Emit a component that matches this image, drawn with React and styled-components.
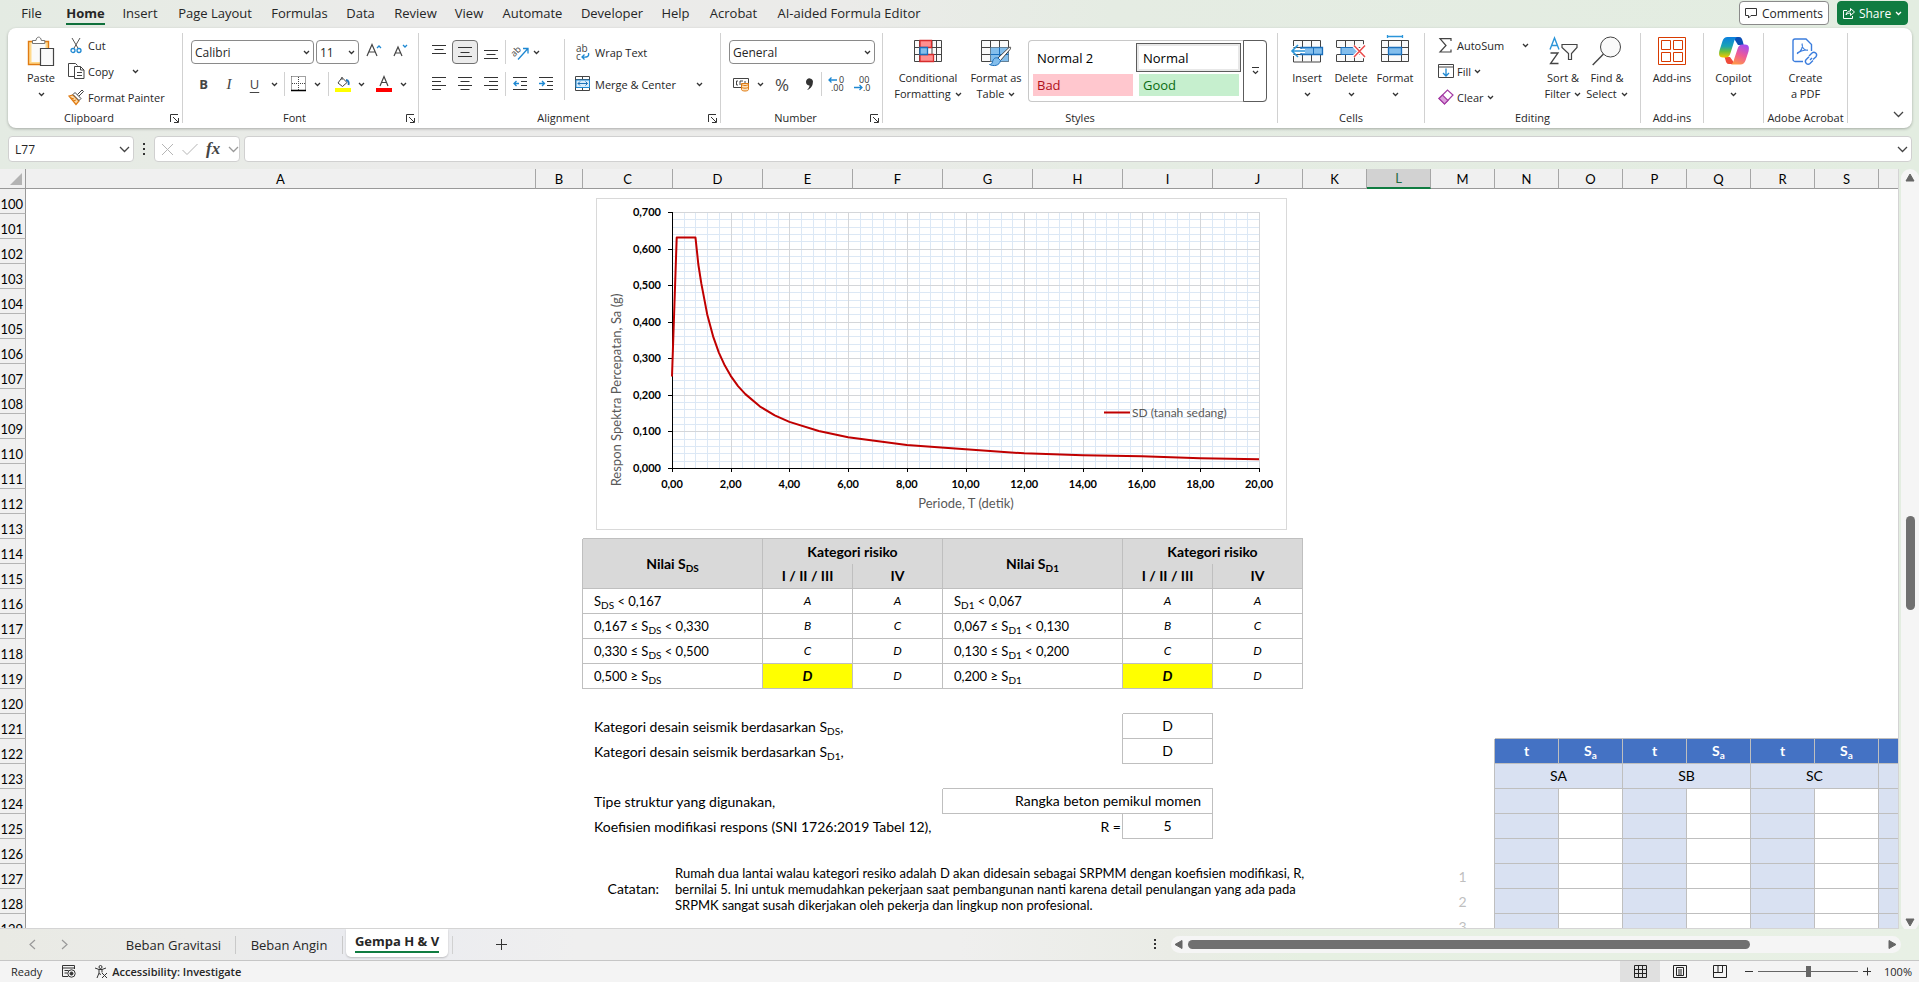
import React, { useState } from 'react'
import styled, { createGlobalStyle, css } from 'styled-components'

const UI = `'Open Sans', 'Noto Sans', sans-serif`
const SHEET = `Lato, 'Open Sans', sans-serif`

const GlobalStyle = createGlobalStyle`
  * {
    box-sizing: border-box;
  }
  body {
    margin: 0;
    overflow: hidden;
    font-family: ${UI};
    color: #262626;
  }
  button, input, select {
    font: inherit;
    color: inherit;
    margin: 0;
    padding: 0;
    border: none;
    background: none;
    outline: none;
  }
  svg {
    display: block;
    flex: none;
    overflow: visible;
  }
`

const Window = styled.div`
  height: 100vh;
  display: flex;
  flex-direction: column;
  background: linear-gradient(90deg, #e4ebe3 0%, #e7ebe5 8%, #ebebea 20%, #ebebe9 44%, #e5ece3 58%, #e3ede1 100%);
`

/* ---------- menu ---------- */

const MenuBar = styled.nav`
  height: 28px;
  flex: none;
  display: flex;
  align-items: flex-start;
  padding: 1px 11px 0 11px;
`

const MenuTab = styled.button`
  height: 24px;
  width: ${p => p.$w}px;
  display: flex;
  justify-content: center;
  font-size: 13px;
  line-height: 24px;
  white-space: nowrap;
`

const MenuText = styled.span`
  height: 24px;
  font-weight: ${p => (p.$active ? 700 : 400)};
  border-bottom: 2px solid ${p => (p.$active ? '#0f703b' : 'transparent')};
`

const MenuSpace = styled.div`
  flex: 1;
`

const CommentsButton = styled.button`
  height: 24px;
  width: 90px;
  display: flex;
  align-items: center;
  justify-content: center;
  gap: 5px;
  font-size: 12px;
  border: 1px solid #8a8a8a;
  border-radius: 4px;
  background: #fff;
`

const ShareButton = styled(CommentsButton)`
  width: 71px;
  margin: 0 0 0 8px;
  gap: 4px;
  color: #fff;
  background: #107c41;
  border-color: #107c41;
`

/* ---------- ribbon ---------- */

const Ribbon = styled.section`
  height: 100px;
  flex: none;
  display: flex;
  margin: 0 7px 0 8px;
  padding: 5px 0;
  background: #fff;
  border-radius: 8px;
  box-shadow: 0 1px 3px rgba(0, 0, 0, 0.28);
  font-size: 11px;
`

const GroupBox = styled.div`
  width: ${p => p.$w}px;
  height: 90px;
  flex: none;
  display: flex;
  flex-direction: column;
  border-right: 1px solid #d1d1d1;
`

const GroupBody = styled.div`
  flex: 1;
  min-height: 0;
  display: flex;
  padding: 0 ${p => p.$pad || 0}px;
  justify-content: ${p => (p.$center ? 'center' : 'flex-start')};
`

const GroupFooter = styled.div`
  height: 12px;
  flex: none;
  display: flex;
  line-height: 14px;
`

const GroupName = styled.div`
  flex: 1;
  text-align: center;
  white-space: nowrap;
`

const Launcher = styled.button`
  width: 12px;
  height: 9px;
  margin-top: 3px;
`

const BigButton = styled.button`
  width: ${p => p.$w}px;
  height: 74px;
  padding-top: 3px;
  display: flex;
  flex-direction: column;
  align-items: center;
`

const BigIcon = styled.span`
  height: 34px;
  display: flex;
  align-items: flex-start;
`

const BigLine = styled.span`
  height: 16px;
  display: flex;
  align-items: center;
  gap: 4px;
  line-height: 16px;
  white-space: nowrap;
`

const Stack = styled.div`
  display: flex;
  flex-direction: column;
  margin-top: -1px;
`

const SmallButton = styled.button`
  height: 26px;
  display: flex;
  align-items: center;
  gap: ${p => p.$gap || 0}px;
  white-space: nowrap;
`

const IconSlot = styled.span`
  width: ${p => p.$w}px;
  display: flex;
  justify-content: ${p => (p.$left ? 'flex-start' : 'center')};
`

const Rows = styled.div`
  display: flex;
  flex-direction: column;
  gap: 8px;
  padding-top: 7px;
  width: ${p => (p.$w ? p.$w + 'px' : 'auto')};
`

const Row = styled.div`
  height: 24px;
  display: flex;
  align-items: center;
  gap: ${p => p.$gap || 0}px;
`

const Tool = styled.button`
  width: ${p => p.$w || 26}px;
  height: 24px;
  flex: none;
  display: flex;
  align-items: center;
  justify-content: center;
  border-radius: 4px;
  ${p => p.$pressed && css`
    background: #ebebeb;
    border: 1px solid #707070;
  `}
`

const Letter = styled.span`
  font-size: ${p => p.$size || 13}px;
  font-weight: ${p => (p.$bold ? 700 : 400)};
  font-style: ${p => (p.$italic ? 'italic' : 'normal')};
  font-family: ${p => (p.$serif ? `'Liberation Serif', serif` : UI)};
  text-decoration: ${p => (p.$under ? 'underline' : 'none')};
  text-underline-offset: 3px;
  color: #444;
`

const Rule = styled.i`
  width: 1px;
  height: ${p => p.$h || 24}px;
  margin: 0 ${p => p.$m ?? 1}px;
  flex: none;
  background: #d1d1d1;
`

const TallRule = styled(Rule)`
  height: 61px;
  margin: 6px 10px 0 0;
`

const Picker = styled.label`
  width: ${p => p.$w}px;
  height: 24px;
  display: flex;
  align-items: center;
  padding: 0 3px;
  border: 1px solid #8a8a8a;
  border-radius: 4px;
  background: #fff;
  font-size: 12px;

  select {
    flex: 1;
    min-width: 0;
    appearance: none;
  }
`

const Gallery = styled.div`
  width: 239px;
  height: 62px;
  margin-top: 7px;
  display: flex;
  border: 1px solid #c8c8c8;
  border-right: none;
  border-radius: 4px;
`

const GalleryGrid = styled.div`
  flex: 1;
  display: grid;
  grid-template-columns: 106px 106px;
  grid-template-rows: 29px 22px;
  row-gap: 2px;
  padding-top: 2px;
`

const Swatch = styled.button`
  margin: 0 2px 0 4px;
  padding-left: 4px;
  text-align: left;
  font-size: 13px;
  color: ${p => p.$fg || '#000'};
  background: ${p => p.$bg || 'transparent'};
  ${p => p.$selected && css`
    margin: 0 0 0 1px;
    padding-left: 6px;
    border: 1px solid #5c5c5c;
    box-shadow: inset 0 0 0 2px #e8e8e8;
  `}
`

const GalleryMore = styled.button`
  width: 24px;
  height: 62px;
  margin-top: -1px;
  display: flex;
  align-items: center;
  justify-content: center;
  border: 1px solid #5c5c5c;
  border-radius: 0 4px 4px 0;
`

const RibbonEnd = styled.div`
  flex: 1;
  display: flex;
  justify-content: flex-end;
  align-items: flex-end;
  padding: 0 8px 5px 0;
`

/* ---------- formula bar ---------- */

const FormulaRow = styled.div`
  height: 41px;
  flex: none;
  display: flex;
  align-items: flex-start;
  padding: 8px 7px 0 8px;
`

const Field = styled.div`
  height: 26px;
  width: ${p => (p.$w ? p.$w + 'px' : 'auto')};
  flex: ${p => (p.$w ? 'none' : '1')};
  margin-left: ${p => p.$ml || 0}px;
  display: flex;
  align-items: center;
  gap: ${p => p.$gap || 0}px;
  padding: 0 3px 0 6px;
  background: #fff;
  border: 1px solid #d0d0d0;
  border-radius: 4px;
  font-size: 12px;

  input {
    flex: 1;
    min-width: 0;
  }
`

const Dots = styled.span`
  width: 20px;
  height: 26px;
  display: flex;
  align-items: center;
  justify-content: center;
`

/* ---------- sheet ---------- */

const SheetArea = styled.main`
  flex: 1;
  min-height: 0;
  display: flex;
`

const Viewport = styled.div`
  flex: 1;
  min-width: 0;
  position: relative;
  overflow: hidden;
  background: #fff;
  border-right: 1px solid #d4d4d4;
  border-bottom: 1px solid #d4d4d4;
`

const Grid = styled.table`
  table-layout: fixed;
  width: 1px;
  border-collapse: separate;
  border-spacing: 0;
  font-family: ${SHEET};
  font-size: 14px;
  line-height: 18px;
  color: #000;
`

const Col = styled.col`
  width: ${p => p.$w}px;
`

const ColHead = styled.th`
  height: 20px;
  padding: 0;
  font-size: 13px;
  font-weight: 400;
  background: ${p => (p.$active ? '#d2d2d2' : '#f0f0f0')};
  color: ${p => (p.$active ? '#1e6b41' : '#000')};
  border-right: 1px solid #a6a6a6;
  border-bottom: ${p => (p.$active ? '2px solid #107c41' : '1px solid #999')};
`

const Corner = styled(ColHead)`
  border-right-color: #999;
  svg {
    margin: 0 0 0 10px;
  }
`

const RowHead = styled.th`
  height: 25px;
  padding: 6px 2px 0 0;
  text-align: right;
  font-size: 13px;
  font-weight: 400;
  line-height: 18px;
  background: #f0f0f0;
  border-right: 1px solid #999;
  border-bottom: 1px solid #b4b4b4;
`

const Cell = styled.td`
  height: 25px;
  padding: 0 ${p => p.$pr || 0}px 0 ${p => p.$pl || 0}px;
  text-align: ${p => p.$align || 'center'};
  white-space: nowrap;
  background: ${p => p.$bg || 'transparent'};
  color: ${p => p.$fg || '#000'};
  font-weight: ${p => (p.$bold ? 700 : 400)};
  border: 0 solid #bfbfbf;
  border-right-width: ${p => (p.$r ? 1 : 0)}px;
  border-bottom-width: ${p => (p.$b ? 1 : 0)}px;

  sub {
    font-size: 10px;
    line-height: 0;
    vertical-align: -3px;
  }
`

const Limit = styled(Cell)`
  font-size: 13px;
`

const Category = styled(Cell)`
  font-size: ${p => (p.$bold ? 14 : 12)}px;
  font-style: italic;
`

const Note = styled(Cell)`
  font-size: 13px;
  line-height: 16px;
`

const ChartFrame = styled.figure`
  position: absolute;
  left: 596px;
  top: 29px;
  width: 691px;
  height: 332px;
  margin: 0;
  background: #fff;
  border: 1px solid #d9d9d9;

  text {
    font-family: ${SHEET};
  }
`

/* ---------- scroll bars, tabs, status ---------- */

const VScroll = styled.div`
  width: 18px;
  margin: 0 0 -2px 2px;
  padding: 4px 0;
  display: flex;
  flex-direction: column;
  align-items: center;
  background: #f5f5f5;
  border-radius: 9px;
`

const HScroll = styled.div`
  width: 730px;
  height: 17px;
  margin-right: 18px;
  padding: 0 3px;
  display: flex;
  align-items: center;
  background: #f5f5f5;
  border-radius: 9px;
`

const ScrollSpace = styled.div`
  flex: ${p => p.$grow};
`

const Thumb = styled.div`
  flex: ${p => p.$grow};
  ${p => (p.$vertical ? 'width' : 'height')}: 9px;
  background: #707070;
  border-radius: 5px;
`

const TabBar = styled.div`
  height: 32px;
  flex: none;
  display: flex;
  align-items: center;
  border-bottom: 1px solid #c6c6c6;
  background: linear-gradient(90deg, #e9eae4 0%, #ebebe9 10%, #eaebf0 19%, #efefef 30%, #efefee 50%, #eaece6 61%, #e6f0e2 68%, #e8f0e5 100%);
`

const TabNav = styled.button`
  width: 32px;
  height: 30px;
  display: flex;
  align-items: center;
  justify-content: center;
`

const SheetTab = styled.button`
  height: 18px;
  width: ${p => p.$w}px;
  font-size: 13px;
  line-height: 18px;
  white-space: nowrap;
  border-right: 1px solid #c9c9c9;
`

const ActiveTab = styled.button`
  align-self: flex-start;
  height: 28px;
  width: 102px;
  margin: 0 4px 0 3px;
  display: flex;
  justify-content: center;
  background: #fff;
  border-radius: 0 0 5px 5px;
  box-shadow: 0 1px 2px rgba(0, 0, 0, 0.2);
  font-size: 13px;
  font-weight: 700;

  span {
    height: 24px;
    line-height: 24px;
    border-bottom: 2px solid #107c41;
  }
`

const StatusBar = styled.footer`
  height: 21px;
  flex: none;
  display: flex;
  align-items: center;
  padding: 0 7px 0 11px;
  background: #f4f4f4;
  font-size: 11px;
  line-height: 20px;
`

const StatusItem = styled.button`
  display: flex;
  align-items: center;
  gap: 4px;
  margin-right: ${p => p.$mr || 0}px;
  font-weight: ${p => (p.$bold ? 600 : 400)};
`

const ViewButton = styled.button`
  width: 40px;
  height: 21px;
  display: flex;
  align-items: center;
  justify-content: center;
  background: ${p => (p.$active ? '#e0e0e0' : 'transparent')};
`

const ZoomStep = styled.button`
  width: 18px;
  display: flex;
  justify-content: center;
`

const ZoomRange = styled.input`
  appearance: none;
  width: 100px;
  height: 13px;
  background: linear-gradient(#666, #666) center / 100% 1px no-repeat;

  &::-webkit-slider-thumb {
    appearance: none;
    width: 5px;
    height: 11px;
    background: #666;
  }
`

/* ---------- icons ---------- */

const Icon = ({ w = 16, h = 16, children, ...rest }) => (
  <svg width={w} height={h} viewBox={`0 0 ${w} ${h}`} fill="none" stroke="#444" aria-hidden="true" {...rest}>{children}</svg>
)

const Chevron = ({ color = '#333' }) => (
  <Icon w={7} h={5} stroke={color} strokeWidth="1.3"><path d="M1 1l2.500 2.500L6 1" /></Icon>
)

const WideChevron = ({ color = '#444' }) => (
  <Icon w={11} h={7} stroke={color} strokeWidth="1.300"><path d="M1 1l4.500 4.500L10 1" /></Icon>
)

const LauncherIcon = () => (
  <Icon w={9} h={9} stroke="#333"><path d="M.5 8V.5H8M3 3l5 5M8.500 4v4.500H4" /></Icon>
)

const PasteIcon = () => (
  <Icon w={28} h={31}>
    <path d="M1.500 5.500h20v23h-20z" fill="#ffd98c" stroke="#e07b12" strokeWidth="1.400" />
    <path d="M4.500 7h14v19h-14z" fill="#fafafa" stroke="none" />
    <path d="M5.500 7.500v-3h3.500c.3-4.500 5-4.500 5.300 0h3.500v3z" fill="#fff" stroke="#767676" />
    <path d="M13.500 12.500h13v17h-13z" fill="#fafafa" stroke="#444" strokeWidth="1.200" />
  </Icon>
)

const CutIcon = () => (
  <Icon w={12} h={17}>
    <path d="M2 1l6.500 11M10 1L3.500 12" stroke="#555" />
    <circle cx="3" cy="13.500" r="2" stroke="#1e88d2" strokeWidth="1.300" />
    <circle cx="9" cy="13.500" r="2" stroke="#1e88d2" strokeWidth="1.300" />
  </Icon>
)

const CopyIcon = () => (
  <Icon w={17} h={17}>
    <path d="M6 13.500H.5V.5h7l2 2" />
    <path d="M6.500 3.500h6l3.500 3.500v8.500H6.500z" fill="#fff" />
    <path d="M12.500 3.500V7H16M9 9.500h5M9 12.500h5" />
  </Icon>
)

const PainterIcon = () => (
  <Icon w={16} h={16}>
    <path d="M1 7l4-1 6 6-3 3.500z" fill="#fbd9a6" stroke="#e07b12" strokeWidth="1.200" />
    <path d="M3 9l3 1M5 12l3-1" stroke="#e07b12" />
    <path d="M5 5.500l2-2 6 6-2 2zM9.500 5.500L14 1l1.500 1.500L11 7" fill="#fff" />
  </Icon>
)

const BordersIcon = () => (
  <Icon w={16} h={16}>
    <path d="M.5 .5h14v14M.5 .5v14M7.500 1v13M1 7.500h14" strokeDasharray="1 1" />
    <path d="M0 14.500h15" stroke="#000" strokeWidth="1.500" />
  </Icon>
)

const FillColorIcon = () => (
  <Icon w={16} h={16}>
    <path d="M7 1.500l5 5L7.500 10.500 3 7z" />
    <path d="M7 1v3" />
    <path d="M11 4c3 .500 3 3 2.500 5" stroke="#1e73b8" strokeWidth="1.800" />
    <path d="M0 12h16v4H0z" fill="#ff0" stroke="none" />
  </Icon>
)

const FontColorIcon = () => (
  <Icon w={16} h={16}>
    <path d="M4 10L8 .500 12 10M5.500 6.500h5" strokeWidth="1.200" />
    <path d="M0 12h16v4H0z" fill="#f00" stroke="none" />
  </Icon>
)

const GrowIcon = ({ down }) => (
  <Icon w={16} h={16}>
    {down
      ? <path d="M1 12L5 3l4 9M2.500 9h5" strokeWidth="1.200" />
      : <path d="M1 12L6 .500 11 12M3 8h6" strokeWidth="1.200" />}
    <path d={down ? 'M10 1l2 2 2-2' : 'M11 4l2-2 2 2'} stroke="#1e88d2" strokeWidth="1.300" />
  </Icon>
)

const LinesIcon = ({ d }) => (
  <Icon w={14} h={14} stroke="#333"><path d={d} /></Icon>
)

const LINES = {
  top: 'M0 .5h14M2.500 4.500h9M0 8.500h14',
  middle: 'M0 2.500h14M2.500 7.500h9M0 11.500h14',
  bottom: 'M0 5.500h14M2.500 9.500h9M0 13.500h14',
  left: 'M0 .5h14M0 4.500h9M0 8.500h14M0 12.500h9',
  center: 'M0 .5h14M2.500 4.500h9M0 8.500h14M2.500 12.500h9',
  right: 'M0 .5h14M5 4.500h9M0 8.500h14M5 12.500h9',
}

const IndentIcon = ({ inward }) => (
  <Icon w={14} h={14} stroke="#333">
    <path d="M0 .5h14M8 4.500h6M8 8.500h6M0 12.500h14" />
    <path d={inward ? 'M0 6.500h5M3 4l2.500 2.500L3 9' : 'M1 6.500h5M3.500 4L1 6.500 3.500 9'} stroke="#1e88d2" strokeWidth="1.300" />
  </Icon>
)

const OrientIcon = () => (
  <Icon w={17} h={17}>
    <text x="0" y="10" fontSize="9" fill="#444" stroke="none" fontFamily={UI} transform="rotate(-45 5 9)">ab</text>
    <path d="M6 15.500L15.500 5M11 4.500h5v5" stroke="#1e88d2" strokeWidth="1.300" />
  </Icon>
)

const WrapIcon = () => (
  <Icon w={16} h={17}>
    <text fontSize="10" fill="#444" stroke="none" fontFamily={UI}>
      <tspan x="1" y="8">ab</tspan>
      <tspan x="1" y="16">c</tspan>
    </text>
    <path d="M13.500 9c1 4-2 4.500-6 4M9.500 10.500L7 13l2.500 2.500" stroke="#1e88d2" strokeWidth="1.300" />
  </Icon>
)

const MergeIcon = () => (
  <Icon w={16} h={16}>
    <path d="M.5 .5h14v14H.5zM.5 3.500h14M.5 11.500h14M7.500 0v3M7.500 12v3" />
    <path d="M1 4h13.500v7.500H1z" fill="#d7ebfa" stroke="#1e88d2" />
    <path d="M3 7.500h9.500M5 5.500l-2 2 2 2M10.500 5.500l2 2-2 2" stroke="#1e73b8" />
  </Icon>
)

const CurrencyIcon = () => (
  <Icon w={17} h={15}>
    <path d="M.5 1.500h15v9H.5z" />
    <path d="M5 4H3.500v4H5M7 8V4h3M12 4v2" />
    <path d="M8.500 6.500h7v6c0 2-7 2-7 0z" fill="#fde2bd" stroke="#e07b12" />
    <path d="M8.500 7c0 2 7 2 7 0M8.500 9.700c0 2 7 2 7 0" stroke="#e07b12" />
  </Icon>
)

const DecimalIcon = ({ less }) => (
  <Icon w={16} h={16}>
    <text fontSize="9" fill="#333" stroke="none" fontFamily={UI}>
      <tspan x={less ? 5 : 11} y="7">{less ? '00' : '0'}</tspan>
      <tspan x={less ? 9 : 3} y="15">{less ? '.0' : '.00'}</tspan>
    </text>
    <path d={less ? 'M0 11.500h8M5.500 9L8 11.500 5.500 14' : 'M1 4h8M3.500 1.500L1 4l2.500 2.500'} stroke="#1e88d2" strokeWidth="1.300" />
  </Icon>
)

const CondIcon = () => (
  <Icon w={28} h={31}>
    <path d="M.5 4.500h27v21H.5zM.5 11.500h27M.5 18.500h27M5.500 4.500v21M18 4.500v21M22.500 4.500v21" fill="#fafafa" />
    <path d="M6 4.500h11.500v7H6zM6 18.500h13.500v7H6z" fill="#ff8f8f" stroke="#d62d2d" strokeWidth="1.300" />
    <path d="M6 11.500h7.500v7H6z" fill="#83beec" stroke="#1b6fbb" strokeWidth="1.300" />
  </Icon>
)

const TableIcon = () => (
  <Icon w={31} h={31}>
    <path d="M.5 4.500h27v21H.5zM.5 11.500h27M.5 18.500h27M9.500 4.500v21M18.500 4.500v21" fill="#fafafa" />
    <path d="M9.500 11.500h18v14h-18z" fill="#83beec" stroke="none" />
    <path d="M9.500 18.500h18M18.500 11.500v14" stroke="#1b6fbb" />
    <path d="M17 22L28 11.500c2-1 2 0 1 2L19.500 24.500z" fill="#fff" />
    <path d="M17 22c-4-1-5 2-5.500 4-.5 2-2 2.500-3 2.500 4 2 10 1.500 11-4z" fill="#83beec" stroke="#1b6fbb" />
  </Icon>
)

const InsertCellsIcon = () => (
  <Icon w={32} h={31}>
    <path d="M2.500 10V4.500h27V26h-27v-6M11.500 4.500v21M20.500 4.500v21M2.500 11.500h27M2.500 18.500h27" fill="#fafafa" />
    <path d="M10 11.500h21.500v7H10z" fill="#83beec" stroke="#1b6fbb" strokeWidth="1.300" />
    <path d="M22.500 12v6" stroke="#1b6fbb" />
    <path d="M2 13h12v4H2z" fill="#fff" stroke="none" />
    <path d="M1 15h13M7 9l-6 6 6 6" stroke="#2b95d9" strokeWidth="1.600" />
  </Icon>
)

const DeleteCellsIcon = () => (
  <Icon w={30} h={31}>
    <path d="M.5 11V4.500h27V11M.5 19v6.500h27V20M9.500 4.500v21M18.500 4.500v21M.5 11.500h27M.5 18.500h27" fill="#fafafa" />
    <path d="M5 11.500h13l3 3.500-3 3.500H5z" fill="#83beec" stroke="#1b6fbb" />
    <path d="M18 9.500L29 21M29 9.500L18 21" stroke="#fff" strokeWidth="4" />
    <path d="M18 9.500L29 21M29 9.500L18 21" stroke="#ea4a4a" strokeWidth="1.500" />
  </Icon>
)

const FormatCellsIcon = () => (
  <Icon w={28} h={31}>
    <path d="M.5 4.500h27v21H.5zM.5 11.500h27M.5 18.500h27M7.500 4.500v21M20.500 4.500v21" fill="#fafafa" />
    <path d="M7.500 11.500h13v7h-13z" fill="#83beec" stroke="#1b6fbb" strokeWidth="1.300" />
    <path d="M6.500 -1v3M21.500 -1v3M6.500 .5h15" stroke="#2b95d9" strokeWidth="1.300" />
  </Icon>
)

const SigmaIcon = () => (
  <Icon w={13} h={15}><path d="M12 3V.700H1L7 7.500 1 14h11v-2.500" strokeWidth="1.200" /></Icon>
)

const FillIcon = () => (
  <Icon w={16} h={15}>
    <path d="M.5 .5h15v13H.5zM.5 3h15" />
    <path d="M8 4.500v7M5 9l3 3 3-3" stroke="#1e88d2" strokeWidth="1.300" />
  </Icon>
)

const ClearIcon = () => (
  <Icon w={16} h={16}>
    <path d="M1 9.500L9.500 1 15 6 6.500 15z" fill="#fff" stroke="#a33ba3" strokeWidth="1.200" />
    <path d="M1 9.500l3.500-3.500 5.500 5.500L6.500 15z" fill="#dc9fdc" stroke="#a33ba3" strokeWidth="1.200" />
  </Icon>
)

const SortIcon = () => (
  <Icon w={29} h={30}>
    <path d="M1 13.500L5.500 2 10 13.500M2.500 9.500h6" stroke="#2b95d9" strokeWidth="1.400" />
    <path d="M1.500 17H9L1.500 27.500H9.500" strokeWidth="1.300" />
    <path d="M13 8.500h15v3l-5.500 6v6h-3v-6l-6.500-6z" fill="#fafafa" strokeWidth="1.200" />
  </Icon>
)

const FindIcon = () => (
  <Icon w={30} h={31}>
    <circle cx="18.500" cy="11" r="10" fill="#fafafa" />
    <path d="M11.500 18L.700 29" strokeWidth="1.400" />
  </Icon>
)

const AddinsIcon = () => (
  <Icon w={28} h={30} stroke="#d83b01">
    <path d="M.5 1.500h27v27H.5z" />
    <path d="M3.500 4.500h9v9h-9zM15.500 4.500h9v9h-9zM3.500 16.500h9v9h-9zM15.500 16.500h9v9h-9z" />
  </Icon>
)

const CopilotIcon = () => (
  <Icon w={30} h={30} stroke="none">
    <defs>
      <linearGradient id="cpA" x1="0" y1="0" x2="0" y2="1">
        <stop offset="0" stopColor="#0b7fe0" />
        <stop offset=".45" stopColor="#1ba3b4" />
        <stop offset=".7" stopColor="#6cbf3c" />
        <stop offset="1" stopColor="#f5c800" />
      </linearGradient>
      <linearGradient id="cpB" x1=".7" y1="0" x2=".3" y2="1">
        <stop offset="0" stopColor="#a64df0" />
        <stop offset=".5" stopColor="#ee5a98" />
        <stop offset="1" stopColor="#ff9648" />
      </linearGradient>
    </defs>
    <path d="M14 1h6c2.500 0 3 2 3.700 4l1 4H19z" fill="#0c4fb5" />
    <path d="M16 28h-6c-2.500 0-3-2-3.500-4l-1-3H11z" fill="#ef4b3a" />
    <path d="M8.500 1H18c-2 1-2.500 3-3.200 5.500L11.500 17c-1 3-2 4.500-5 4.500H4c-4 0-4.500-3-3.500-7L3.500 5C4.500 2.200 6 1 8.500 1z" fill="url(#cpA)" />
    <path d="M21.500 28.500H12c2-1 2.500-3 3.200-5.500L18.500 13c1-3 2-4.500 5-4.500H26c4 0 4.500 3 3.500 7l-3 9c-1 2.800-2.500 4-5 4z" fill="url(#cpB)" />
  </Icon>
)

const PdfIcon = () => (
  <Icon w={27} h={31} stroke="#3b7ddd" strokeWidth="1.400">
    <path d="M11 25.500H3c-1 0-2-1-2-2V5c0-1 1-2 2-2h11l5.500 5.500V15" />
    <path d="M5 17c5-1 6-7 5-9.500M10 8c0 4 3 7 6 6.500M5 18c3-3.500 7-4 11-4" strokeWidth="1.100" />
    <path d="M17 20l3-3c2.500-2 6 1 4 3.800l-3 2.700M20 22l-2 2M21 24.500l-3 3c-2.500 2-6-1-4-3.800l3-3" />
  </Icon>
)

const CommentIcon = () => (
  <Icon w={12} h={12} stroke="#333"><path d="M.5 1.500h11v7H6L3.500 11V8.500h-3z" /></Icon>
)

const ShareIcon = () => (
  <Icon w={12} h={13} stroke="#fff">
    <path d="M4 3.500H.5v8h9V9" />
    <path d="M3 8c.5-3 2-4 4.500-4V1.500L11.500 5 7.500 8.500V6C5.500 6 4 6.500 3 8z" />
  </Icon>
)

const Arrow = ({ dir }) => {
  const d = { up: 'M5 1l4 7H1z', down: 'M5 8L1 1h8z', left: 'M1 4.500L8 .500v8z', right: 'M8 4.500L1 .500v8z' }[dir]
  return <Icon w={10} h={9} stroke="#666" strokeLinejoin="round"><path d={d} fill="#666" /></Icon>
}

/* ---------- ribbon groups ---------- */

const Group = ({ name, w, pad, center, launcher, children }) => (
  <GroupBox $w={w}>
    <GroupBody $pad={pad} $center={center}>{children}</GroupBody>
    <GroupFooter>
      <GroupName>{name}</GroupName>
      {launcher && <Launcher aria-label={`${name} settings`}><LauncherIcon /></Launcher>}
    </GroupFooter>
  </GroupBox>
)

const Big = ({ w, icon, lines, arrow }) => (
  <BigButton $w={w}>
    <BigIcon>{icon}</BigIcon>
    {lines.map((l, i) => (
      <BigLine key={l}>{l}{arrow && i === 1 && <Chevron />}</BigLine>
    ))}
    {arrow && lines.length === 1 && <BigLine><Chevron /></BigLine>}
  </BigButton>
)

const DropDown = ({ w, label, value }) => (
  <Picker $w={w}>
    <select aria-label={label} defaultValue={value}>
      <option>{value}</option>
    </select>
    <Chevron />
  </Picker>
)

const RibbonBar = () => (
  <Ribbon>
    <Group name="Clipboard" w={175} pad={6} launcher>
      <Big w={54} icon={<PasteIcon />} lines={['Paste']} arrow />
      <Stack>
        <SmallButton $gap={4}><IconSlot $w={16}><CutIcon /></IconSlot>Cut</SmallButton>
        <SmallButton $gap={18}>
          <SmallButton as="span" $gap={4}><IconSlot $w={16} $left><CopyIcon /></IconSlot>Copy</SmallButton>
          <Chevron />
        </SmallButton>
        <SmallButton $gap={4}><IconSlot $w={16} $left><PainterIcon /></IconSlot>Format Painter</SmallButton>
      </Stack>
    </Group>

    <Group name="Font" w={236} pad={8} launcher>
      <Rows>
        <Row $gap={2}>
          <DropDown w={123} label="Font" value="Calibri" />
          <DropDown w={43} label="Font size" value="11" />
          <Tool $w={26} aria-label="Increase font size"><GrowIcon /></Tool>
          <Tool $w={24} aria-label="Decrease font size"><GrowIcon down /></Tool>
        </Row>
        <Row>
          <Tool $w={25}><Letter $bold>B</Letter></Tool>
          <Tool $w={26}><Letter $italic $serif $size={15}>I</Letter></Tool>
          <Tool $w={25}><Letter $under>U</Letter></Tool>
          <Tool $w={14} aria-label="Underline style"><Chevron /></Tool>
          <Rule $m={3} />
          <Tool $w={22} aria-label="Borders"><BordersIcon /></Tool>
          <Tool $w={14} aria-label="Border style"><Chevron /></Tool>
          <Rule $m={4} />
          <Tool $w={20} aria-label="Fill color"><FillColorIcon /></Tool>
          <Tool $w={16} aria-label="Fill colors"><Chevron /></Tool>
          <Tool $w={30} aria-label="Font color"><FontColorIcon /></Tool>
          <Tool $w={8} aria-label="Font colors"><Chevron /></Tool>
        </Row>
      </Rows>
    </Group>

    <Group name="Alignment" w={302} pad={7} launcher>
      <Rows $w={138}>
        <Row>
          <Tool aria-label="Top align"><LinesIcon d={LINES.top} /></Tool>
          <Tool $pressed aria-label="Middle align"><LinesIcon d={LINES.middle} /></Tool>
          <Tool aria-label="Bottom align"><LinesIcon d={LINES.bottom} /></Tool>
          <Rule />
          <Tool aria-label="Orientation"><OrientIcon /></Tool>
          <Chevron />
        </Row>
        <Row>
          <Tool aria-label="Align left"><LinesIcon d={LINES.left} /></Tool>
          <Tool aria-label="Center"><LinesIcon d={LINES.center} /></Tool>
          <Tool aria-label="Align right"><LinesIcon d={LINES.right} /></Tool>
          <Rule />
          <Tool aria-label="Decrease indent"><IndentIcon /></Tool>
          <Tool aria-label="Increase indent"><IndentIcon inward /></Tool>
        </Row>
      </Rows>
      <TallRule />
      <Rows>
        <Row>
          <SmallButton $gap={4}><IconSlot $w={16}><WrapIcon /></IconSlot>Wrap Text</SmallButton>
        </Row>
        <Row $gap={20}>
          <SmallButton $gap={4}><IconSlot $w={16}><MergeIcon /></IconSlot>Merge &amp; Center</SmallButton>
          <Chevron />
        </Row>
      </Rows>
    </Group>

    <Group name="Number" w={162} pad={8} launcher>
      <Rows>
        <Row><DropDown w={146} label="Number format" value="General" /></Row>
        <Row>
          <Tool $w={25} aria-label="Accounting format"><CurrencyIcon /></Tool>
          <Tool $w={12} aria-label="Accounting formats"><Chevron /></Tool>
          <Tool $w={32}><Letter $size={17}>%</Letter></Tool>
          <Tool $w={22} aria-label="Comma style">
            <Icon w={9} h={13}><path d="M1 4a3.500 3.500 0 1 1 6.800 1C7.500 9 4.500 11.500 2 12c1.500-1.500 2.500-3 2.500-4.500C2.500 7.500 1 6 1 4z" fill="#333" stroke="none" /></Icon>
          </Tool>
          <Rule />
          <Tool aria-label="Increase decimal"><DecimalIcon /></Tool>
          <Tool aria-label="Decrease decimal"><DecimalIcon less /></Tool>
        </Row>
      </Rows>
    </Group>

    <Group name="Styles" w={395} pad={9}>
      <Big w={72} icon={<CondIcon />} lines={['Conditional', 'Formatting']} arrow />
      <Big w={64} icon={<TableIcon />} lines={['Format as', 'Table']} arrow />
      <Gallery>
        <GalleryGrid>
          <Swatch>Normal 2</Swatch>
          <Swatch $selected>Normal</Swatch>
          <Swatch $bg="#ffc7ce" $fg="#b0101a">Bad</Swatch>
          <Swatch $bg="#c6efce" $fg="#0b6b12">Good</Swatch>
        </GalleryGrid>
        <GalleryMore aria-label="More styles">
          <Icon w={9} h={8} stroke="#333"><path d="M1 .5h7M2 4l2.500 2.500L7 4" strokeWidth="1.200" /></Icon>
        </GalleryMore>
      </Gallery>
    </Group>

    <Group name="Cells" w={147} pad={7}>
      <Big w={44} icon={<InsertCellsIcon />} lines={['Insert']} arrow />
      <Big w={44} icon={<DeleteCellsIcon />} lines={['Delete']} arrow />
      <Big w={44} icon={<FormatCellsIcon />} lines={['Format']} arrow />
    </Group>

    <Group name="Editing" w={216} pad={12}>
      <Stack>
        <SmallButton $gap={18}>
          <SmallButton as="span" $gap={3}><IconSlot $w={17}><SigmaIcon /></IconSlot>AutoSum</SmallButton>
          <Chevron />
        </SmallButton>
        <SmallButton $gap={3}><IconSlot $w={17}><FillIcon /></IconSlot>Fill<Chevron /></SmallButton>
        <SmallButton $gap={3}><IconSlot $w={17}><ClearIcon /></IconSlot>Clear<Chevron /></SmallButton>
      </Stack>
      <MenuSpace />
      <Big w={46} icon={<SortIcon />} lines={['Sort &', 'Filter']} arrow />
      <Big w={42} icon={<FindIcon />} lines={['Find &', 'Select']} arrow />
    </Group>

    <Group name="Add-ins" w={63} center>
      <Big w={62} icon={<AddinsIcon />} lines={['Add-ins']} />
    </Group>
    <Group name="" w={60} center>
      <Big w={58} icon={<CopilotIcon />} lines={['Copilot']} arrow />
    </Group>
    <Group name="Adobe Acrobat" w={84} center>
      <Big w={80} icon={<PdfIcon />} lines={['Create', 'a PDF']} />
    </Group>
    <RibbonEnd><button aria-label="Collapse ribbon"><WideChevron /></button></RibbonEnd>
  </Ribbon>
)

/* ---------- chart ---------- */

const SPECTRUM = [
  [0, 0.25], [0.16, 0.63], [0.8, 0.63], [0.9, 0.555], [1, 0.504], [1.2, 0.42], [1.4, 0.36], [1.6, 0.315],
  [1.8, 0.28], [2, 0.252], [2.25, 0.224], [2.5, 0.202], [3, 0.168], [3.5, 0.144], [4, 0.126], [5, 0.101],
  [6, 0.084], [8, 0.063], [10, 0.051], [12, 0.04], [14, 0.035], [16, 0.032], [18, 0.027], [20, 0.024],
]
const PLOT = { x: 75, y: 13, w: 587, h: 256 }
const px = t => PLOT.x + (t / 20) * PLOT.w
const py = s => PLOT.y + PLOT.h - (s / 0.7) * PLOT.h
const snap = v => Math.round(v) + 0.5
const comma = (v, n) => v.toFixed(n).replace('.', ',')
const range = n => Array.from({ length: n }, (_, i) => i)

const SpectrumChart = () => (
  <ChartFrame>
    <svg width="689" height="330" viewBox="0 0 689 330" role="img" aria-label="Respon spektra">
      <g stroke="#dce8f5">
        {range(51).map(i => <path key={i} d={`M${snap(px(i * 0.4))} ${PLOT.y}v${PLOT.h}`} />)}
        {range(36).map(i => <path key={i} d={`M${PLOT.x} ${snap(py(i * 0.02))}h${PLOT.w}`} />)}
      </g>
      <g stroke="#d4d6d9">
        {range(11).map(i => <path key={i} d={`M${snap(px(i * 2))} ${PLOT.y}v${PLOT.h}`} />)}
        {range(8).map(i => <path key={i} d={`M${PLOT.x} ${snap(py(i * 0.1))}h${PLOT.w}`} />)}
      </g>
      <g stroke="#000">
        <path d={`M${snap(px(0))} ${PLOT.y}v${PLOT.h}M${PLOT.x} ${snap(py(0))}h${PLOT.w + 1}`} />
        {range(11).map(i => <path key={i} d={`M${snap(px(i * 2))} ${PLOT.y + PLOT.h}v4`} />)}
        {range(8).map(i => <path key={i} d={`M${PLOT.x - 4} ${snap(py(i * 0.1))}h4`} />)}
      </g>
      <polyline
        points={SPECTRUM.map(([t, s]) => `${px(t)},${py(s)}`).join(' ')}
        fill="none" stroke="#c00000" strokeWidth="2" strokeLinejoin="round"
      />
      <g fontSize="11" fontWeight="700">
        {range(8).map(i => <text key={i} x="64" y={py(i * 0.1) + 4} textAnchor="end">{comma(i * 0.1, 3)}</text>)}
        {range(11).map(i => <text key={i} x={px(i * 2)} y="289" textAnchor="middle">{comma(i * 2, 2)}</text>)}
      </g>
      <g fontSize="13" fill="#595959">
        <text x="369" y="309" textAnchor="middle">Periode, T (detik)</text>
        <text transform="translate(24 191) rotate(-90)" textAnchor="middle">Respon Spektra Percepatan, Sa (g)</text>
        <text x="535" y="218" fontSize="12">SD (tanah sedang)</text>
      </g>
      <path d="M507 213.500h26" stroke="#c00000" strokeWidth="2" />
    </svg>
  </ChartFrame>
)

/* ---------- sheet ---------- */

const COLUMNS = [
  ['A', 510], ['B', 47], ['C', 90], ['D', 90], ['E', 90], ['F', 90], ['G', 90], ['H', 90], ['I', 90], ['J', 90],
  ['K', 64], ['L', 64], ['M', 64], ['N', 64], ['O', 64], ['P', 64], ['Q', 64], ['R', 64], ['S', 64], ['T', 64], ['U', 64],
]

const RISK = [
  { ds: <>S<sub>DS</sub> &lt; 0,167</>, d1: <>S<sub>D1</sub> &lt; 0,067</>, low: 'A', high: 'A' },
  { ds: <>0,167 ≤ S<sub>DS</sub> &lt; 0,330</>, d1: <>0,067 ≤ S<sub>D1</sub> &lt; 0,130</>, low: 'B', high: 'C' },
  { ds: <>0,330 ≤ S<sub>DS</sub> &lt; 0,500</>, d1: <>0,130 ≤ S<sub>D1</sub> &lt; 0,200</>, low: 'C', high: 'D' },
  { ds: <>0,500 ≥ S<sub>DS</sub></>, d1: <>0,200 ≥ S<sub>D1</sub></>, low: 'D', high: 'D', hit: true },
]

const GREY = '#d9d9d9'
const BLUE = '#4472c4'
const PALE = '#d9e1f2'

const Line = ({ n, children }) => (
  <tr><RowHead scope="row">{n}</RowHead>{children}</tr>
)

// columns N..U, a pale column followed by a white one
const SpectrumCells = () => range(8).map(i => <Cell key={i} $r $b $bg={i % 2 ? '#fff' : PALE} />)

const RiskRow = ({ n, row }) => (
  <Line n={n}>
    <Cell /><Cell $r />
    <Limit colSpan={2} $r $b $align="left" $pl={11}>{row.ds}</Limit>
    <Category $r $b $bold={row.hit} $bg={row.hit && '#ff0'}>{row.low}</Category>
    <Category $r $b>{row.high}</Category>
    <Limit colSpan={2} $r $b $align="left" $pl={11}>{row.d1}</Limit>
    <Category $r $b $bold={row.hit} $bg={row.hit && '#ff0'}>{row.low}</Category>
    <Category $r $b>{row.high}</Category>
  </Line>
)

const Sheet = () => (
  <Grid>
    <colgroup>
      <Col $w={26} />
      {COLUMNS.map(([c, w]) => <Col key={c} $w={w} />)}
    </colgroup>
    <thead>
      <tr>
        <Corner><Icon w={12} h={12} stroke="none"><path d="M12 0v12H0z" fill="#b3b3b3" /></Icon></Corner>
        {COLUMNS.map(([c]) => <ColHead key={c} scope="col" $active={c === 'L'}>{c}</ColHead>)}
      </tr>
    </thead>
    <tbody>
      {range(13).map(i => <Line key={i} n={100 + i} />)}
      <Line n={113}><Cell colSpan={2} /><Cell colSpan={8} $b /></Line>
      <Line n={114}>
        <Cell /><Cell $r />
        <Cell colSpan={2} rowSpan={2} $r $b $bold $bg={GREY}>Nilai S<sub>DS</sub></Cell>
        <Cell colSpan={2} $r $bold $bg={GREY}>Kategori risiko</Cell>
        <Cell colSpan={2} rowSpan={2} $r $b $bold $bg={GREY}>Nilai S<sub>D1</sub></Cell>
        <Cell colSpan={2} $r $bold $bg={GREY}>Kategori risiko</Cell>
      </Line>
      <Line n={115}>
        <Cell /><Cell $r />
        <Cell $r $b $bold $bg={GREY}>I / II / III</Cell>
        <Cell $r $b $bold $bg={GREY}>IV</Cell>
        <Cell $r $b $bold $bg={GREY}>I / II / III</Cell>
        <Cell $r $b $bold $bg={GREY}>IV</Cell>
      </Line>
      {RISK.map((row, i) => <RiskRow key={i} n={116 + i} row={row} />)}
      <Line n={120}><Cell colSpan={8} /><Cell $b /></Line>
      <Line n={121}>
        <Cell colSpan={2} />
        <Cell colSpan={6} $r $align="left" $pl={11}>Kategori desain seismik berdasarkan S<sub>DS</sub>,</Cell>
        <Cell $r $b>D</Cell>
        <Cell colSpan={4} />
        <Cell colSpan={8} $b />
      </Line>
      <Line n={122}>
        <Cell colSpan={2} />
        <Cell colSpan={6} $r $align="left" $pl={11}>Kategori desain seismik berdasarkan S<sub>D1</sub>,</Cell>
        <Cell $r $b>D</Cell>
        <Cell colSpan={4} $r />
        {range(8).map(i => (
          <Cell key={i} $r $b $bold $bg={BLUE} $fg="#fff">{i % 2 ? <>S<sub>a</sub></> : 't'}</Cell>
        ))}
      </Line>
      <Line n={123}>
        <Cell colSpan={6} /><Cell colSpan={3} $b /><Cell colSpan={4} $r />
        {['SA', 'SB', 'SC', 'SD'].map(s => <Cell key={s} colSpan={2} $r $b $bg={PALE}>{s}</Cell>)}
      </Line>
      <Line n={124}>
        <Cell colSpan={2} />
        <Cell colSpan={4} $r $align="left" $pl={11}>Tipe struktur yang digunakan,</Cell>
        <Cell colSpan={3} $r $b $align="right" $pr={11}>Rangka beton pemikul momen</Cell>
        <Cell colSpan={4} $r />
        <SpectrumCells />
      </Line>
      <Line n={125}>
        <Cell colSpan={2} />
        <Cell colSpan={5} $align="left" $pl={11}>Koefisien modifikasi respons (SNI 1726:2019 Tabel 12),</Cell>
        <Cell $r $align="right" $pr={1}>R =</Cell>
        <Cell $r $b>5</Cell>
        <Cell colSpan={4} $r />
        <SpectrumCells />
      </Line>
      <Line n={126}><Cell colSpan={13} $r /><SpectrumCells /></Line>
      <Line n={127}>
        <Cell colSpan={2} />
        <Cell rowSpan={2} $align="right" $pr={14}>Catatan:</Cell>
        <Note colSpan={7} rowSpan={2} $align="left" $pl={2}>
          Rumah dua lantai walau kategori resiko adalah D akan didesain sebagai SRPMM dengan koefisien modifikasi, R,<br />
          bernilai 5. Ini untuk memudahkan pekerjaan saat pembangunan nanti karena detail penulangan yang ada pada<br />
          SRPMK sangat susah dikerjakan oleh pekerja dan lingkup non profesional.
        </Note>
        <Cell colSpan={2} /><Cell $r $fg="#bfbfbf">1</Cell>
        <SpectrumCells />
      </Line>
      <Line n={128}>
        <Cell colSpan={2} />
        <Cell colSpan={2} /><Cell $r $fg="#bfbfbf">2</Cell>
        <SpectrumCells />
      </Line>
      <Line n={129}>
        <Cell colSpan={12} /><Cell $r $fg="#bfbfbf">3</Cell>
        <SpectrumCells />
      </Line>
    </tbody>
  </Grid>
)

const MENU = [
  ['File', 41], ['Home', 67], ['Insert', 42], ['Page Layout', 108], ['Formulas', 61], ['Data', 61], ['Review', 49],
  ['View', 58], ['Automate', 69], ['Developer', 90], ['Help', 37], ['Acrobat', 79], ['AI-aided Formula Editor', 152],
]

const App = () => {
  const [cell, setCell] = useState('L77')
  const [formula, setFormula] = useState('')
  const [zoom, setZoom] = useState(100)

  return (
    <Window>
      <GlobalStyle />
      <MenuBar>
        {MENU.map(([name, w]) => (
          <MenuTab key={name} $w={w}><MenuText $active={name === 'Home'}>{name}</MenuText></MenuTab>
        ))}
        <MenuSpace />
        <CommentsButton><CommentIcon />Comments</CommentsButton>
        <ShareButton><ShareIcon />Share<Chevron color="#fff" /></ShareButton>
      </MenuBar>

      <RibbonBar />

      <FormulaRow>
        <Field $w={126}>
          <input aria-label="Name box" value={cell} onChange={e => setCell(e.target.value)} />
          <WideChevron />
        </Field>
        <Dots><Icon w={3} h={12} stroke="none"><path d="M0 0h2v2H0zM0 5h2v2H0zM0 10h2v2H0z" fill="#333" /></Icon></Dots>
        <Field $w={86} $gap={8}>
          <button aria-label="Cancel"><Icon w={13} h={13} stroke="#b5b5b5"><path d="M1 1l11 11M12 1L1 12" /></Icon></button>
          <button aria-label="Enter"><Icon w={16} h={13} stroke="#b5b5b5"><path d="M.5 7l4.500 4.500L15.500 1" /></Icon></button>
          <button aria-label="Insert function"><Letter $italic $serif $bold $size={17}>fx</Letter></button>
          <WideChevron color="#999" />
        </Field>
        <Field $ml={4}>
          <input aria-label="Formula" value={formula} onChange={e => setFormula(e.target.value)} />
          <WideChevron />
        </Field>
      </FormulaRow>

      <SheetArea>
        <Viewport>
          <Sheet />
          <SpectrumChart />
        </Viewport>
        <VScroll>
          <button aria-label="Scroll up"><Arrow dir="up" /></button>
          <ScrollSpace $grow={334} />
          <Thumb $vertical $grow={95} />
          <ScrollSpace $grow={308} />
          <button aria-label="Scroll down"><Arrow dir="down" /></button>
        </VScroll>
      </SheetArea>

      <TabBar>
        <IconSlot $w={16} />
        <TabNav aria-label="Previous sheet"><Icon w={7} h={11} stroke="#999" strokeWidth="1.200"><path d="M6 1L1 5.500 6 10" /></Icon></TabNav>
        <TabNav aria-label="Next sheet"><Icon w={7} h={11} stroke="#999" strokeWidth="1.200"><path d="M1 1l5 4.500L1 10" /></Icon></TabNav>
        <IconSlot $w={32} />
        <SheetTab $w={124}>Beban Gravitasi</SheetTab>
        <SheetTab $w={107}>Beban Angin</SheetTab>
        <ActiveTab><span>Gempa H &amp; V</span></ActiveTab>
        <Rule $h={18} $m={0} />
        <IconSlot $w={32} />
        <TabNav aria-label="New sheet"><Icon w={11} h={11} stroke="#333"><path d="M5.500 0v11M0 5.500h11" /></Icon></TabNav>
        <MenuSpace />
        <Dots><Icon w={3} h={12} stroke="none"><path d="M0 0h2v2H0zM0 4h2v2H0zM0 8h2v2H0z" fill="#333" /></Icon></Dots>
        <IconSlot $w={6} />
        <HScroll>
          <button aria-label="Scroll left"><Arrow dir="left" /></button>
          <ScrollSpace $grow={4} />
          <Thumb $grow={562} />
          <ScrollSpace $grow={138} />
          <button aria-label="Scroll right"><Arrow dir="right" /></button>
        </HScroll>
      </TabBar>

      <StatusBar>
        <StatusItem as="span" $mr={20}>Ready</StatusItem>
        <StatusItem $mr={18} aria-label="Record macro">
          <Icon w={14} h={13} stroke="#333">
            <path d="M6 11.500H.5V.5h12V4M.5 3h12M2.500 5.500h4M2.500 8h3" />
            <circle cx="9.500" cy="8.500" r="3.700" />
            <circle cx="9.500" cy="8.500" r="1.500" fill="#333" />
          </Icon>
        </StatusItem>
        <StatusItem $bold>
          <Icon w={14} h={14} stroke="#333">
            <circle cx="6.500" cy="2" r="1.500" />
            <path d="M1 3l4 1.500h3L12 3M5 4.500V8l-2 5M8 4.500v3M5 8.500l2 1M8 8l5 5M13 8l-5 5" />
          </Icon>
          Accessibility: Investigate
        </StatusItem>
        <MenuSpace />
        <ViewButton $active aria-label="Normal view"><Icon w={13} h={13} stroke="#222"><path d="M.5 .5h12v12H.5zM.5 4.500h12M.5 8.500h12M4.500 .5v12M8.500 .5v12" /></Icon></ViewButton>
        <ViewButton aria-label="Page layout view"><Icon w={14} h={13} stroke="#222"><path d="M.5 .5h13v12H.5zM3.500 2.500h7v8h-7zM5 5h4M5 7h4M5 9h4" /></Icon></ViewButton>
        <ViewButton aria-label="Page break view"><Icon w={14} h={13} stroke="#222"><path d="M.5 .5h13v12H.5zM5 .5v7M9.500 .5v7M.5 7.500h9" /></Icon></ViewButton>
        <ZoomStep aria-label="Zoom out" onClick={() => setZoom(zoom - 10)}><Icon w={9} h={9} stroke="#333"><path d="M0 4.500h8" /></Icon></ZoomStep>
        <ZoomRange type="range" min="0" max="200" aria-label="Zoom" value={zoom} onChange={e => setZoom(+e.target.value)} />
        <ZoomStep aria-label="Zoom in" onClick={() => setZoom(zoom + 10)}><Icon w={9} h={9} stroke="#333"><path d="M0 4.500h8M4.500 .5v8" /></Icon></ZoomStep>
        <IconSlot $w={8} />
        <StatusItem>{zoom}%</StatusItem>
      </StatusBar>
    </Window>
  )
}

export default App
